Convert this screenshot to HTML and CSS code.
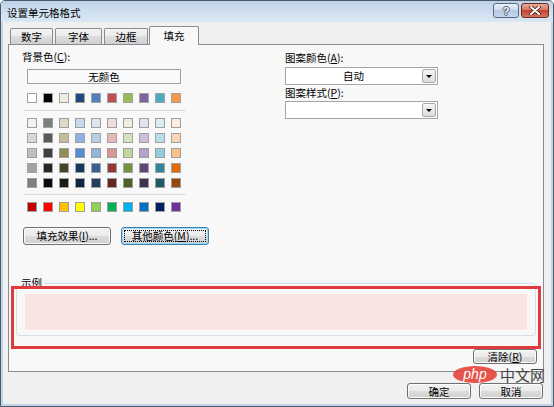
FILE: index.html
```html
<!DOCTYPE html>
<html lang="zh">
<head>
<meta charset="utf-8">
<title>设置单元格格式</title>
<link rel="stylesheet" href="styles.css">
</head>
<body>
<div class="window">
  <div class="titlebar">
    <span class="title">设置单元格格式</span>
    <div class="caps">
      <span class="cap help">?</span>
      <span class="cap close"><svg width="12" height="9" viewBox="0 0 12 9"><path d="M2 1 L10 8 M10 1 L2 8" stroke="#4a1c14" stroke-width="3.6" stroke-linecap="round"/><path d="M2 1 L10 8 M10 1 L2 8" stroke="#ffffff" stroke-width="2" stroke-linecap="round"/></svg></span>
    </div>
  </div>
  <div class="client">
    <div class="tabs">
      <div class="tab t1">数字</div>
      <div class="tab t2">字体</div>
      <div class="tab t3">边框</div>
      <div class="tab active">填充</div>
    </div>
    <div class="panel">
      <div class="top">
        <div class="left">
          <div class="label">背景色(<u>C</u>):</div>
          <div class="nocolor">无颜色</div>
          <div class="row row1">
            <span class="sw" style="background:#FFFFFF"></span><span class="sw" style="background:#000000"></span><span class="sw" style="background:#EEECE1"></span><span class="sw" style="background:#1F497D"></span><span class="sw" style="background:#4F81BD"></span><span class="sw" style="background:#C0504D"></span><span class="sw" style="background:#9BBB59"></span><span class="sw" style="background:#8064A2"></span><span class="sw" style="background:#4BACC6"></span><span class="sw" style="background:#F79646"></span>
          </div>
          <div class="sep"></div>
          <div class="grid">
            <span class="sw" style="background:#F2F2F2"></span><span class="sw" style="background:#7F7F7F"></span><span class="sw" style="background:#DDD9C3"></span><span class="sw" style="background:#C6D9F0"></span><span class="sw" style="background:#DBE5F1"></span><span class="sw" style="background:#F2DCDB"></span><span class="sw" style="background:#EBF1DD"></span><span class="sw" style="background:#E5E0EC"></span><span class="sw" style="background:#DBEEF3"></span><span class="sw" style="background:#FDEADA"></span>
            <span class="sw" style="background:#D8D8D8"></span><span class="sw" style="background:#595959"></span><span class="sw" style="background:#C4BD97"></span><span class="sw" style="background:#8DB3E2"></span><span class="sw" style="background:#B8CCE4"></span><span class="sw" style="background:#E5B9B7"></span><span class="sw" style="background:#D7E3BC"></span><span class="sw" style="background:#CCC1D9"></span><span class="sw" style="background:#B7DDE8"></span><span class="sw" style="background:#FBD5B5"></span>
            <span class="sw" style="background:#BFBFBF"></span><span class="sw" style="background:#3F3F3F"></span><span class="sw" style="background:#938953"></span><span class="sw" style="background:#548DD4"></span><span class="sw" style="background:#95B3D7"></span><span class="sw" style="background:#D99694"></span><span class="sw" style="background:#C3D69B"></span><span class="sw" style="background:#B2A2C7"></span><span class="sw" style="background:#92CDDC"></span><span class="sw" style="background:#FAC08F"></span>
            <span class="sw" style="background:#A5A5A5"></span><span class="sw" style="background:#262626"></span><span class="sw" style="background:#494429"></span><span class="sw" style="background:#17365D"></span><span class="sw" style="background:#366092"></span><span class="sw" style="background:#953734"></span><span class="sw" style="background:#76923C"></span><span class="sw" style="background:#5F497A"></span><span class="sw" style="background:#31859B"></span><span class="sw" style="background:#E36C09"></span>
            <span class="sw" style="background:#7F7F7F"></span><span class="sw" style="background:#0C0C0C"></span><span class="sw" style="background:#1D1B10"></span><span class="sw" style="background:#0F243E"></span><span class="sw" style="background:#244061"></span><span class="sw" style="background:#632423"></span><span class="sw" style="background:#4F6128"></span><span class="sw" style="background:#3F3151"></span><span class="sw" style="background:#205867"></span><span class="sw" style="background:#974806"></span>
          </div>
          <div class="sep sep2"></div>
          <div class="row std">
            <span class="sw" style="background:#C00000"></span><span class="sw" style="background:#FF0000"></span><span class="sw" style="background:#FFC000"></span><span class="sw" style="background:#FFFF00"></span><span class="sw" style="background:#92D050"></span><span class="sw" style="background:#00B050"></span><span class="sw" style="background:#00B0F0"></span><span class="sw" style="background:#0070C0"></span><span class="sw" style="background:#002060"></span><span class="sw" style="background:#7030A0"></span>
          </div>
          <div class="btns">
            <button class="btn wide">填充效果(<u>I</u>)...</button>
            <button class="btn wide focus"><span class="focus-ring">其他颜色(<u>M</u>)...</span></button>
          </div>
        </div>
        <div class="right">
          <div class="label">图案颜色(<u>A</u>):</div>
          <div class="select"><span class="val">自动</span><span class="arrow"></span></div>
          <div class="label label2">图案样式(<u>P</u>):</div>
          <div class="select select2"><span class="val"></span><span class="arrow"></span></div>
        </div>
      </div>
      <fieldset class="sample">
        <legend>示例</legend>
        <div class="fill"></div>
      </fieldset>
      <div class="clear-row"><button class="btn clear">清除(<u>R</u>)</button></div>
    </div>
    <div class="footer">
      <button class="btn ok">确定</button>
      <button class="btn ok">取消</button>
    </div>
  </div>
  <div class="annot"></div>
  <div class="wm"><span class="php">php</span><span class="cn">中文网</span></div>
</div>
</body>
</html>
```

FILE: styles.css
```css
* { box-sizing: border-box; }
body {
  margin: 0;
  font-family: "Noto Sans CJK SC", "Noto Sans", sans-serif;
  font-size: 10.5px;
  color: #000;
}
.window {
  position: relative;
  width: 554px;
  height: 407px;
  border: 1px solid #4e5a68;
  border-radius: 5px 5px 0 0;
  background: #f0f0f0;
  overflow: hidden;
  display: flex;
  flex-direction: column;
}
.titlebar {
  height: 21px;
  flex: none;
  display: flex;
  align-items: flex-start;
  padding-left: 6px;
  background: linear-gradient(#bcd2ea, #d2e1f1 60%, #dae7f4);
}
.title {
  flex: 1;
  margin-top: 5px;
  line-height: 14px;
}
.caps {
  display: flex;
  gap: 2px;
  margin-top: 2px;
  margin-right: 4px;
}
.cap {
  height: 15px;
  border: 1px solid #5b6a80;
  border-radius: 3px;
  display: flex;
  align-items: center;
  justify-content: center;
}
.help {
  width: 26px;
  background: linear-gradient(#e9f0f8, #cbdaec 50%, #b5c9e2 50%, #c6d7ec);
  font: bold 11px "Liberation Sans", sans-serif;
  color: #f4f6f9;
  text-shadow: 1px 0 0 #4f5e74, -1px 0 0 #4f5e74, 0 1px 0 #4f5e74, 0 -1px 0 #4f5e74;
}
.close {
  width: 28px;
  border-color: #6f2a20;
  background: linear-gradient(#e9a898, #d6715f 50%, #c2432e 50%, #d3745f);
}
.client {
  flex: 1;
  display: flex;
  flex-direction: column;
  border: 2px solid #bfd5eb;
  border-top: none;
}
.tabs {
  display: flex;
  align-items: flex-end;
  height: 23px;
  padding-left: 7px;
  margin-bottom: -1px;
  position: relative;
  z-index: 1;
}
.tab {
  height: 16px;
  margin-bottom: 1px;
  border: 1px solid #898c95;
  border-bottom: none;
  border-radius: 2px 2px 0 0;
  background: linear-gradient(#f3f3f3, #ebebeb 50%, #dedede 50%, #d0d0d0);
  text-align: center;
  line-height: 15px;
}
.t1 { width: 43px; margin-right: 2px; }
.t2 { width: 47px; margin-right: 2px; }
.t3 { width: 44px; margin-right: 1px; }
.tab.active {
  width: 50px;
  height: 19px;
  margin-bottom: 0;
  background: #f8f8f8;
  line-height: 17px;
}
.panel {
  margin: 0 7px 0 5px;
  height: 328px;
  flex: none;
  border: 1px solid #898c95;
  background: #f8f8f8;
  padding-top: 5px;
  display: flex;
  flex-direction: column;
}
.top {
  display: flex;
  align-items: flex-start;
}
.left {
  margin-left: 13px;
  width: 188px;
}
.right {
  margin-left: 75px;
  width: 153px;
  padding-top: 1px;
}
.label {
  height: 14px;
  line-height: 14px;
  white-space: nowrap;
}
.nocolor {
  margin: 5px 0 0 5px;
  width: 154px;
  height: 15px;
  border: 1px solid #a0a0a0;
  background: #f9f9f9;
  text-align: center;
  line-height: 13px;
}
.row {
  display: flex;
  gap: 6px;
  margin-left: 5px;
}
.row1 { margin-top: 9px; }
.std { margin-top: 7px; }
.sw {
  width: 10px;
  height: 10px;
  flex: none;
  border: 1px solid #a0a0a0;
}
.sep {
  width: 163px;
  height: 1px;
  margin: 7px 0 0 1px;
  background: #dcdcdc;
}
.sep2 { margin-top: 6px; }
.grid {
  display: grid;
  grid-template-columns: repeat(10, 10px);
  column-gap: 6px;
  row-gap: 5px;
  margin: 7px 0 0 5px;
}
.btns {
  display: flex;
  gap: 10px;
  margin: 15px 0 0 1px;
}
.btn {
  font: inherit;
  color: #000;
  padding: 0;
  border: 1px solid #707070;
  border-radius: 3px;
  background: linear-gradient(#f2f2f2, #ebebeb 50%, #dddddd 50%, #cfcfcf);
  box-shadow: inset 0 0 0 1px #fbfbfb;
  white-space: nowrap;
}
.btn.wide {
  width: 88px;
  height: 18px;
  line-height: 14px;
}
.btn.focus {
  display: flex;
  padding: 2px;
  border-color: #3c7fb1;
  box-shadow: inset 0 0 0 1px #97dbf7;
}
.focus-ring {
  flex: 1;
  border: 1px dotted #000;
  line-height: 10px;
}
.select {
  display: flex;
  height: 18px;
  margin-top: 2px;
  border: 1px solid #a5a5a5;
  background: #fff;
}
.select2 { margin-top: 1px; }
.label2 { margin-top: 1px; }
.val {
  flex: 1;
  text-align: center;
  line-height: 16px;
}
.arrow {
  width: 14px;
  margin: 1px;
  border: 1px solid #a9a9a9;
  border-radius: 2px;
  background: linear-gradient(#f5f5f5, #dcdcdc);
  display: flex;
  align-items: center;
  justify-content: center;
}
.arrow::after {
  content: "";
  border-left: 3px solid transparent;
  border-right: 3px solid transparent;
  border-top: 3px solid #000;
}
.sample {
  margin: 32px 7px 0 7px;
  padding: 0;
  min-width: 0;
  border: 1px solid #d5dfe5;
  border-radius: 3px;
}
.sample legend {
  padding: 0 2px 0 4px;
  line-height: 12px;
  font-size: 10.5px;
}
.fill {
  height: 36px;
  margin: 5px 8px;
  background: #fae3e3;
}
.clear-row {
  display: flex;
  justify-content: flex-end;
  margin: 13px 6px 0 0;
}
.btn.clear {
  width: 64px;
  height: 15px;
  line-height: 12px;
}
.footer {
  display: flex;
  justify-content: flex-end;
  gap: 8px;
  margin-top: 11px;
  padding-right: 8px;
}
.btn.ok {
  width: 64px;
  height: 16px;
  line-height: 13px;
}
.annot {
  position: absolute;
  left: 10px;
  top: 285px;
  width: 530px;
  height: 63px;
  border: 3px solid #e03c40;
}
.wm {
  position: absolute;
  left: 452px;
  top: 365px;
  display: flex;
  align-items: center;
  gap: 3px;
}
.php {
  width: 44px;
  height: 17px;
  border-radius: 50%;
  background: rgba(228, 62, 52, 0.88);
  color: #fff;
  font: italic 14px "Liberation Sans", sans-serif;
  text-align: center;
  line-height: 16px;
}
.cn {
  font-size: 15px;
  line-height: 16px;
  color: #444;
}
```
